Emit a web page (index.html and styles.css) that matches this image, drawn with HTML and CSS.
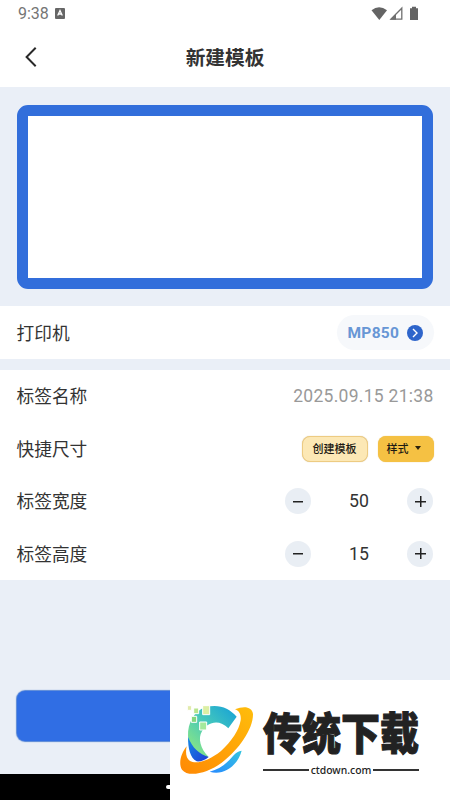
FILE: index.html
```html
<!DOCTYPE html>
<html lang="zh-CN">
<head>
<meta charset="utf-8">
<title>新建模板</title>
<link rel="stylesheet" href="styles.css">
</head>
<body>
<div class="screen">
  <div class="status">
    <span class="clock">9:38</span>
    <svg class="input-icon" width="10" height="11" viewBox="0 0 10 11"><rect width="10" height="11" rx="1" fill="#666"/><path d="M2.7 7.5 5 2.5l2.3 5M3.5 6h3" fill="none" stroke="#fff" stroke-width="1.3"/></svg>
    <svg class="signals" width="50" height="16" viewBox="0 0 50 16"><path d="M.5 4.2Q8-1.8 16 4.2L8.3 14Z" fill="#646464"/><path d="M30.8 2.2v10.9H20Z" fill="none" stroke="#707070" stroke-width="1.3"/><path d="M19 13.7l6-6v6Z" fill="#707070"/><path d="M39 2.2h2V.7h4v1.5h2V14h-8Z" fill="#646464"/></svg>
  </div>
  <header class="header">
    <svg class="back" width="14" height="22" viewBox="0 0 14 22"><path d="M11.7 1.8 2.6 11l9.1 9.2" fill="none" stroke="#292929" stroke-width="2"/></svg>
    <h1>新建模板</h1>
  </header>
  <section class="preview"><div class="label-canvas"></div></section>
  <section class="printer row">
    <span class="name">打印机</span>
    <div class="printer-pill"><span>MP850</span><svg width="16" height="16" viewBox="0 0 16 16"><circle cx="8" cy="8" r="8" fill="#2e65cb"/><path d="m6 4 4 4-4 4" fill="none" stroke="#fff" stroke-width="1.4"/></svg></div>
  </section>
  <section class="form">
    <div class="row"><span class="name">标签名称</span><span class="date">2025.09.15 21:38</span></div>
    <div class="row"><span class="name">快捷尺寸</span><div class="choices"><span class="chip create">创建模板</span><span class="chip style">样式<i class="caret"></i></span></div></div>
    <div class="row"><span class="name">标签宽度</span><div class="stepper"><span class="round minus"></span><b>50</b><span class="round plus"></span></div></div>
    <div class="row"><span class="name">标签高度</span><div class="stepper"><span class="round minus"></span><b>15</b><span class="round plus"></span></div></div>
  </section>
  <footer class="footer"><div class="submit"></div></footer>
  <div class="navbar"><i></i></div>
  <aside class="brand">
    <svg class="emblem" width="85" height="120" viewBox="0 0 255 360">
      <defs>
        <linearGradient id="c" x1="1" y1="0" x2="0" y2="1"><stop offset="0" stop-color="#139fd9"/><stop offset=".45" stop-color="#43c6bd"/><stop offset="1" stop-color="#98ed79"/></linearGradient>
        <linearGradient id="o" x1="1" y1="0" x2="0" y2="1"><stop stop-color="#ffbd0b"/><stop offset="1" stop-color="#ff8904"/></linearGradient>
        <linearGradient id="b" x1="0" y1="0" x2="1" y2="1"><stop stop-color="#168be5"/><stop offset="1" stop-color="#203bd5"/></linearGradient>
        <linearGradient id="d" x1="0" y1="1" x2="1" y2="0"><stop stop-color="#278aff"/><stop offset="1" stop-color="#35c5df"/></linearGradient>
      </defs>
      <path d="M200 110C176 82 143 71 106 82C72 93 53 129 54 169C58 209 82 235 116 231C91 207 83 174 96 154C110 127 147 115 175 145Z" fill="url(#c)"/>
      <path d="M54 170C54 205 60 233 80 244Q98 246 116 231C88 222 67 204 54 170Z" fill="url(#b)"/>
      <path d="M195 88C222 77 246 80 249 102C250 146 207 209 155 248C111 280 55 293 36 269C24 250 34 219 50 199C46 218 48 235 60 243C81 255 121 239 153 213C185 184 207 151 212 121C214 103 207 92 195 88Z" fill="url(#o)"/>
      <path d="M215 212C203 257 161 288 119 275C148 268 170 251 189 228C198 217 206 213 215 212Z" fill="url(#d)"/>
      <g stroke="#fff" stroke-width="3"><path d="M98 77h21v27H98z" fill="#dcefa3"/><path d="M71 84h15v17H71z" fill="#b7e58c"/><path d="M64 109h16v18H64z" fill="#83d77e"/><path d="M89 126h21v24H89z" fill="#a5e99b"/><path d="M52 77h13v14H52z" fill="#e2ebac"/></g>
    </svg>
    <div class="brand-copy"><strong>传统下载</strong><div class="domain"><span>ctdown.com</span></div></div>
  </aside>
</div>
</body>
</html>
```
FILE: styles.css
```css
* { box-sizing: border-box; }
body { margin: 0; font-family: Roboto, "Noto Sans CJK SC", sans-serif; color: #333; }
.screen { position: relative; width: 450px; height: 800px; overflow: hidden; background: #eaeff7; }
.status { height: 27px; padding: 0 29px 0 18px; display: flex; align-items: center; background: #fff; }
.clock { font-size: 16px; color: #757575; }
.input-icon { margin-left: 6px; }
.signals { margin-left: auto; }
.header { height: 60px; padding: 0 24px; display: grid; grid-template-columns: 14px 1fr 14px; align-items: center; background: #fff; }
h1 { margin: 0; padding-top: 4px; text-align: center; font-size: 19.7px; line-height: 28px; font-weight: 700; }
.preview { height: 219px; padding: 18px 17px 17px; }
.label-canvas { height: 184px; border: 11px solid #326edb; border-radius: 11px; background: #fff; }
.row { display: flex; align-items: center; justify-content: space-between; height: 52.5px; padding: 0 16.5px; font-size: 17.7px; line-height: 26px; }
.name { padding-top: 2px; }
.printer { height: 53px; background: #fff; }
.printer-pill { width: 97px; height: 35px; border-radius: 18px; padding: 0 11px; display: flex; align-items: center; justify-content: space-between; background: #f6f8fb; color: #6796d5; font-size: 15.5px; font-weight: 700; letter-spacing: .3px; }
.form { margin-top: 11px; height: 210px; background: #fff; }
.date { font-size: 17.5px; letter-spacing: .28px; color: #999; }
.choices { display: flex; gap: 10px; }
.chip { height: 26px; padding-top: 2px; border-radius: 8px; display: flex; align-items: center; justify-content: center; font-size: 11px; font-weight: 500; color: #1d1a13; }
.create { width: 66px; border: 1px solid #edcb82; background: #fce8b5; box-shadow: 0 0 1px #d7be85; }
.style { width: 56px; background: #f5c143; box-shadow: 0 0 1px #dfb95c; padding-right: 4px; }
.caret { width: 0; height: 0; margin: -3px 0 0 6px; border: 3.5px solid transparent; border-top: 4px solid #2b210c; border-bottom: 0; }
.stepper { width: 149px; display: flex; justify-content: space-between; align-items: center; }
.stepper b { font-size: 17.7px; font-weight: 400; }
.round { width: 26px; height: 26px; border-radius: 50%; background: linear-gradient(#222, #222) center / 10px 1.5px no-repeat #e9eef4; }
.plus { background: linear-gradient(#222, #222) center / 11px 1.5px no-repeat, linear-gradient(#222, #222) center / 1.5px 11px no-repeat, #e9eef4; }
.footer { height: 194px; padding: 111px 17px 0; }
.submit { height: 50px; border-radius: 8px; background: #306ee4; box-shadow: 0 0 1px 1px #5686d5; }
.navbar { height: 26px; background: #000; padding: 11px 0 0 166px; }
.navbar i { display: block; width: 118px; height: 4px; border-radius: 2px; background: #fff; }
.brand { position: absolute; right: 0; bottom: 0; width: 280px; height: 120px; display: flex; background: #fff; }
.emblem { flex: none; }
.brand-copy { width: 156px; margin-left: 8px; padding-top: 30px; color: #222; }
.brand-copy strong { display: block; width: 156px; height: 40px; font: 900 39px/40px "Noto Sans CJK SC", sans-serif; white-space: nowrap; transform: scaleY(1.15); -webkit-text-stroke: .9px #222; }
.domain { margin-top: 12px; display: flex; align-items: center; gap: 2px; font: 500 10.4px/16px "Noto Sans", sans-serif; }
.domain::before, .domain::after { content: ""; flex: 1; height: 2px; background: #333; }
```
